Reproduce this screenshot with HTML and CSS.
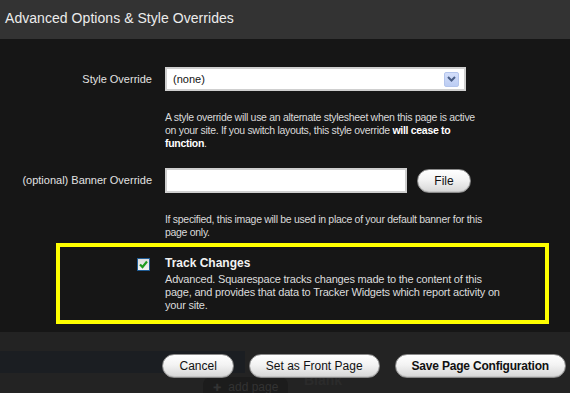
FILE: index.html
```html
<!DOCTYPE html>
<html lang="en">
<head>
<meta charset="utf-8">
<title>Advanced Options &amp; Style Overrides</title>
<link rel="stylesheet" href="styles.css">
</head>
<body>
<div class="modal">
  <header class="modal-head">
    <h1 class="modal-title">Advanced Options &amp; Style Overrides</h1>
  </header>
  <main class="modal-body">
    <div class="form-grid">
      <label class="lbl lbl-select">Style Override</label>
      <div class="ctl">
        <div class="select">
          <span class="select-value">(none)</span>
          <span class="select-btn">
            <svg width="9" height="6" viewBox="0 0 9 6"><path d="M1 1 L4.5 4.5 L8 1" fill="none" stroke="#4a5e86" stroke-width="2"/></svg>
          </span>
        </div>
        <p class="help">A style override will use an alternate stylesheet when this page is active on your site. If you switch layouts, this style override <b>will cease to function</b>.</p>
      </div>
      <label class="lbl lbl-input">(optional) Banner Override</label>
      <div class="ctl">
        <div class="file-row">
          <div class="text-input"></div>
          <button class="btn btn-file">File</button>
        </div>
        <p class="help">If specified, this image will be used in place of your default banner for this page only.</p>
      </div>
    </div>
    <div class="track-box">
      <span class="check">
        <svg width="11" height="11" viewBox="0 0 11 11"><path d="M2 5.5 L4.5 8 L9 2.5" fill="none" stroke="#1e9a1e" stroke-width="2.2"/></svg>
      </span>
      <div class="track-text">
        <h2 class="track-title">Track Changes</h2>
        <p class="track-desc">Advanced. Squarespace tracks changes made to the content of this page, and provides that data to Tracker Widgets which report activity on your site.</p>
      </div>
    </div>
  </main>
  <footer class="modal-foot">
    <div class="behind">
      <div class="behind-band"></div>
      <div class="behind-pill"><span class="plus">✚</span> add page</div>
      <span class="behind-title">Blank</span>
    </div>
    <div class="actions">
      <button class="btn">Cancel</button>
      <button class="btn">Set as Front Page</button>
      <button class="btn btn-primary">Save Page Configuration</button>
    </div>
  </footer>
</div>
</body>
</html>
```
FILE: styles.css
```css
* { box-sizing: border-box; }
html, body { margin: 0; padding: 0; }
body {
  width: 570px;
  height: 393px;
  overflow: hidden;
  background: #161616;
  font-family: "Liberation Sans", Arial, sans-serif;
}
.modal { display: flex; flex-direction: column; height: 393px; }

.modal-head {
  height: 39px;
  background: #333333;
  padding: 10px 0 0 5px;
}
.modal-title {
  margin: 0;
  font-weight: normal;
  font-size: 14px;
  line-height: 16px;
  color: #ececec;
  letter-spacing: 0.05px;
}

.modal-body {
  background: #161616;
  padding: 28px 0 8px 0;
}
.form-grid {
  display: grid;
  grid-template-columns: 152px 1fr;
  column-gap: 13px;
  row-gap: 18px;
}
.lbl {
  text-align: right;
  font-size: 11px;
  color: #e2e2e2;
}
.lbl-select { line-height: 24px; }
.lbl-input { line-height: 25px; }

.select {
  width: 301px;
  height: 24px;
  background: #fff;
  border: 2px solid #cfcfcf;
  display: flex;
  align-items: center;
  justify-content: space-between;
  padding: 0 5px 0 6px;
}
.select-value { font-size: 11px; color: #111; }
.select-btn {
  width: 15px;
  height: 15px;
  background: linear-gradient(#d3defa, #bccdf3);
  border: 1px solid #b4c5ec;
  border-radius: 2px;
  display: flex;
  align-items: center;
  justify-content: center;
}
.help {
  margin: 20px 0 0 0;
  width: 322px;
  font-size: 10.5px;
  letter-spacing: -0.3px;
  line-height: 13px;
  color: #dadada;
}
.help b { color: #fff; }

.file-row { display: flex; align-items: center; gap: 10px; }
.text-input {
  width: 242px;
  height: 25px;
  background: #fff;
  border: 2px solid #cfcfcf;
}

.btn {
  font-family: "Liberation Sans", Arial, sans-serif;
  font-size: 12px;
  color: #111;
  height: 24px;
  padding: 0 16px;
  border: 1px solid #8a8a8a;
  border-radius: 12px;
  background: linear-gradient(#ffffff 0%, #f3f3f3 45%, #d6d6d6 100%);
  box-shadow: inset 0 -1px 0 #c4c4c4;
}
.btn-file { width: 54px; padding: 0; }
.btn-primary { font-weight: bold; letter-spacing: -0.2px; }

.track-box {
  margin: 4px 0 0 56px;
  width: 493px;
  border: 4px solid #ffff00;
  padding: 9px 10px 8px 77px;
  display: flex;
  gap: 15px;
  align-items: flex-start;
}
.check {
  margin-top: 2px;
  flex: none;
  width: 13px;
  height: 13px;
  border: 1px solid #1f5b93;
  background: linear-gradient(#dcdcdc, #f2f2f2);
  display: flex;
  align-items: center;
  justify-content: center;
}
.track-title {
  margin: 0;
  font-size: 12px;
  line-height: 14px;
  font-weight: bold;
  color: #f2f2f2;
}
.track-desc {
  margin: 3px 0 0 0;
  width: 345px;
  font-size: 11px;
  letter-spacing: -0.2px;
  line-height: 13px;
  color: #dcdcdc;
}

.modal-foot {
  position: relative;
  flex: 1;
  background: #232323;
  padding: 22px 4px 0 0;
}
.behind { position: absolute; inset: 0; }
.behind-band {
  position: absolute;
  left: 0; top: 19px;
  width: 245px; height: 22px;
  background: #1b1e22;
}
.behind-pill {
  position: absolute;
  left: 203px; top: 45px;
  width: 85px; height: 22px;
  border-radius: 8px;
  background: #1c1c1c;
  font-size: 12px;
  color: #333333;
  padding: 3px 0 0 10px;
}
.plus { font-size: 10px; color: #333333; margin-right: 4px; }
.behind-title {
  position: absolute;
  left: 304px; top: 40px;
  font-size: 14px;
  font-weight: bold;
  color: #2b2b2b;
}
.actions {
  position: relative;
  display: flex;
  justify-content: flex-end;
  gap: 15px;
}
```
